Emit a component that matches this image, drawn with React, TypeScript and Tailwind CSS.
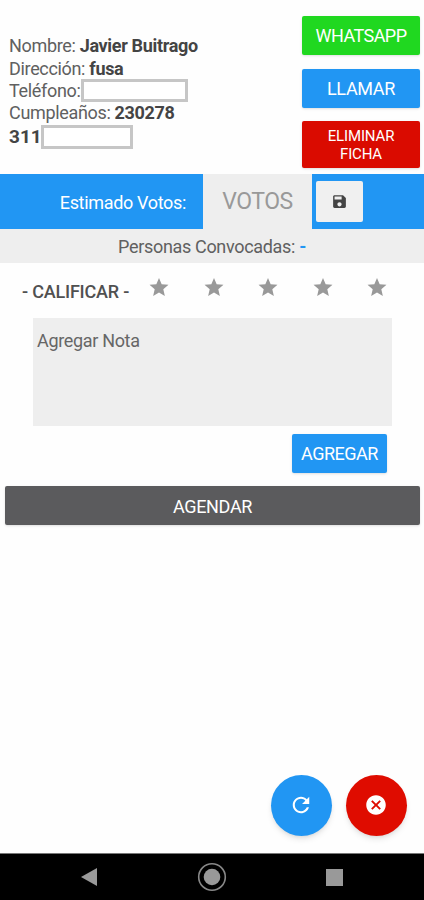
import React, { useState } from "react";
import { IoMdCloseCircle, IoMdRefresh, IoMdSave, IoMdStar } from "react-icons/io";

const App: React.FC = () => {
    const [rating, setRating] = useState<number>(0);
    const [votes, setVotes] = useState<string>("");
    const [note, setNote] = useState<string>("");

    return (
        <main className="flex h-[900px] w-[424px] flex-col overflow-hidden bg-[#fefefe] font-['Roboto',sans-serif] text-[18px] tracking-[-0.33px] text-[#606060]">
            <header className="flex h-[174px] shrink-0 justify-between pl-[9px] pr-1">
                <div className="pt-[35px] leading-[22.6px]">
                    <p>Nombre: <b className="font-bold text-[#444]">Javier Buitrago</b></p>
                    <p>Dirección: <b className="font-bold text-[#444]">fusa</b></p>
                    <p className="flex">
                        <span className="w-[72px]">Teléfono:</span>
                        <span className="-mt-px h-[23px] w-[107px] border-[3px] border-[#c6c6c6] bg-white" />
                    </p>
                    <p className="-mt-px">Cumpleaños: <b className="font-bold text-[#444]">230278</b></p>
                    <p className="flex items-center text-[19px] font-bold tracking-normal text-[#444]">
                        <span className="w-8 pt-0.5">311</span>
                        <span className="h-6 w-[92px] border-[3px] border-[#c6c6c6] bg-white" />
                    </p>
                </div>
                <div className="flex w-[118px] flex-col pt-4 text-white">
                    <button className="h-[39px] rounded-xs bg-[#20d820] tracking-[-0.55px] shadow-sm">WHATSAPP</button>
                    <button className="mt-3.5 h-[39px] rounded-xs bg-[#2196f3] shadow-sm">LLAMAR</button>
                    <button className="mt-[13px] h-[47px] rounded-xs bg-[#da0b00] px-4 text-[15px] leading-[18px] tracking-[-0.15px] shadow-sm">ELIMINAR FICHA</button>
                </div>
            </header>

            <section className="flex h-[55px] shrink-0 items-center bg-[#2196f3]">
                <label className="w-[203px] pr-[17px] pt-0.5 text-right text-white">Estimado Votos:</label>
                <input
                    value={votes}
                    onChange={(e) => setVotes(e.target.value)}
                    placeholder="VOTOS"
                    className="h-full w-[109px] bg-[#eee] text-center text-[23px] tracking-[-0.5px] outline-none placeholder:text-[#999]"
                />
                <button className="ml-1 flex h-[41px] w-[47px] items-center justify-center rounded-xs bg-[#f0f0f0] text-[#444]">
                    <IoMdSave size={17} />
                </button>
            </section>

            <p className="flex h-[34px] shrink-0 items-center justify-center bg-[#eee] pt-px">
                Personas Convocadas:&nbsp;<span className="font-bold text-[#2196f3]">-</span>
            </p>

            <section className="flex h-[55px] shrink-0 items-center pl-[22px]">
                <span className="w-[110px] whitespace-nowrap pt-px tracking-[-0.2px] text-[18px] font-medium text-[#505050]">- CALIFICAR -</span>
                <div className="flex">
                    {[1, 2, 3, 4, 5].map((star) => (
                        <button
                            key={star}
                            onClick={() => setRating(star)}
                            className={`flex w-[54.5px] justify-center pb-2 ${star <= rating ? "text-[#2196f3]" : "text-[#999]"}`}
                        >
                            <IoMdStar size={24} />
                        </button>
                    ))}
                </div>
            </section>

            <textarea
                value={note}
                onChange={(e) => setNote(e.target.value)}
                placeholder="Agregar Nota"
                className="ml-[33px] h-[108px] w-[359px] shrink-0 resize-none bg-[#eee] px-1 py-[9px] tracking-[-0.33px] outline-none placeholder:text-[#666]"
            />
            <button className="ml-[292px] mt-2 h-[39px] w-[95px] shrink-0 rounded-xs bg-[#2196f3] tracking-[-0.5px] text-white shadow-sm">AGREGAR</button>
            <button className="ml-[5px] mr-1 mt-[13px] h-[39px] shrink-0 rounded-xs bg-[#5b5b5d] pt-0.5 text-white shadow-sm">AGENDAR</button>

            <div className="mb-[17px] mr-[17px] mt-auto flex justify-end gap-3.5">
                <button className="flex size-[61px] items-center justify-center rounded-full bg-[#2196f3] pb-0.5 pr-0.5 text-white shadow-md">
                    <IoMdRefresh size={24} />
                </button>
                <button className="flex size-[61px] items-center justify-center rounded-full bg-[#df0c00] pb-0.5 pr-0.5 text-white shadow-md">
                    <IoMdCloseCircle size={24} />
                </button>
            </div>

            <nav className="flex h-[47px] shrink-0 items-center border-t border-[#777] bg-black">
                <svg className="ml-[81px]" width="17" height="20" viewBox="0 0 17 20" fill="#999">
                    <path d="M0 10 16 1v18z" />
                </svg>
                <svg className="ml-[99px]" width="30" height="30" viewBox="0 0 30 30" fill="#999">
                    <circle cx="15" cy="15" r="13.3" fill="none" stroke="#888" strokeWidth="1.6" />
                    <circle cx="15" cy="15" r="8.3" />
                </svg>
                <span className="ml-[99px] size-[17px] bg-[#999]" />
            </nav>
        </main>
    );
};

export default App;
